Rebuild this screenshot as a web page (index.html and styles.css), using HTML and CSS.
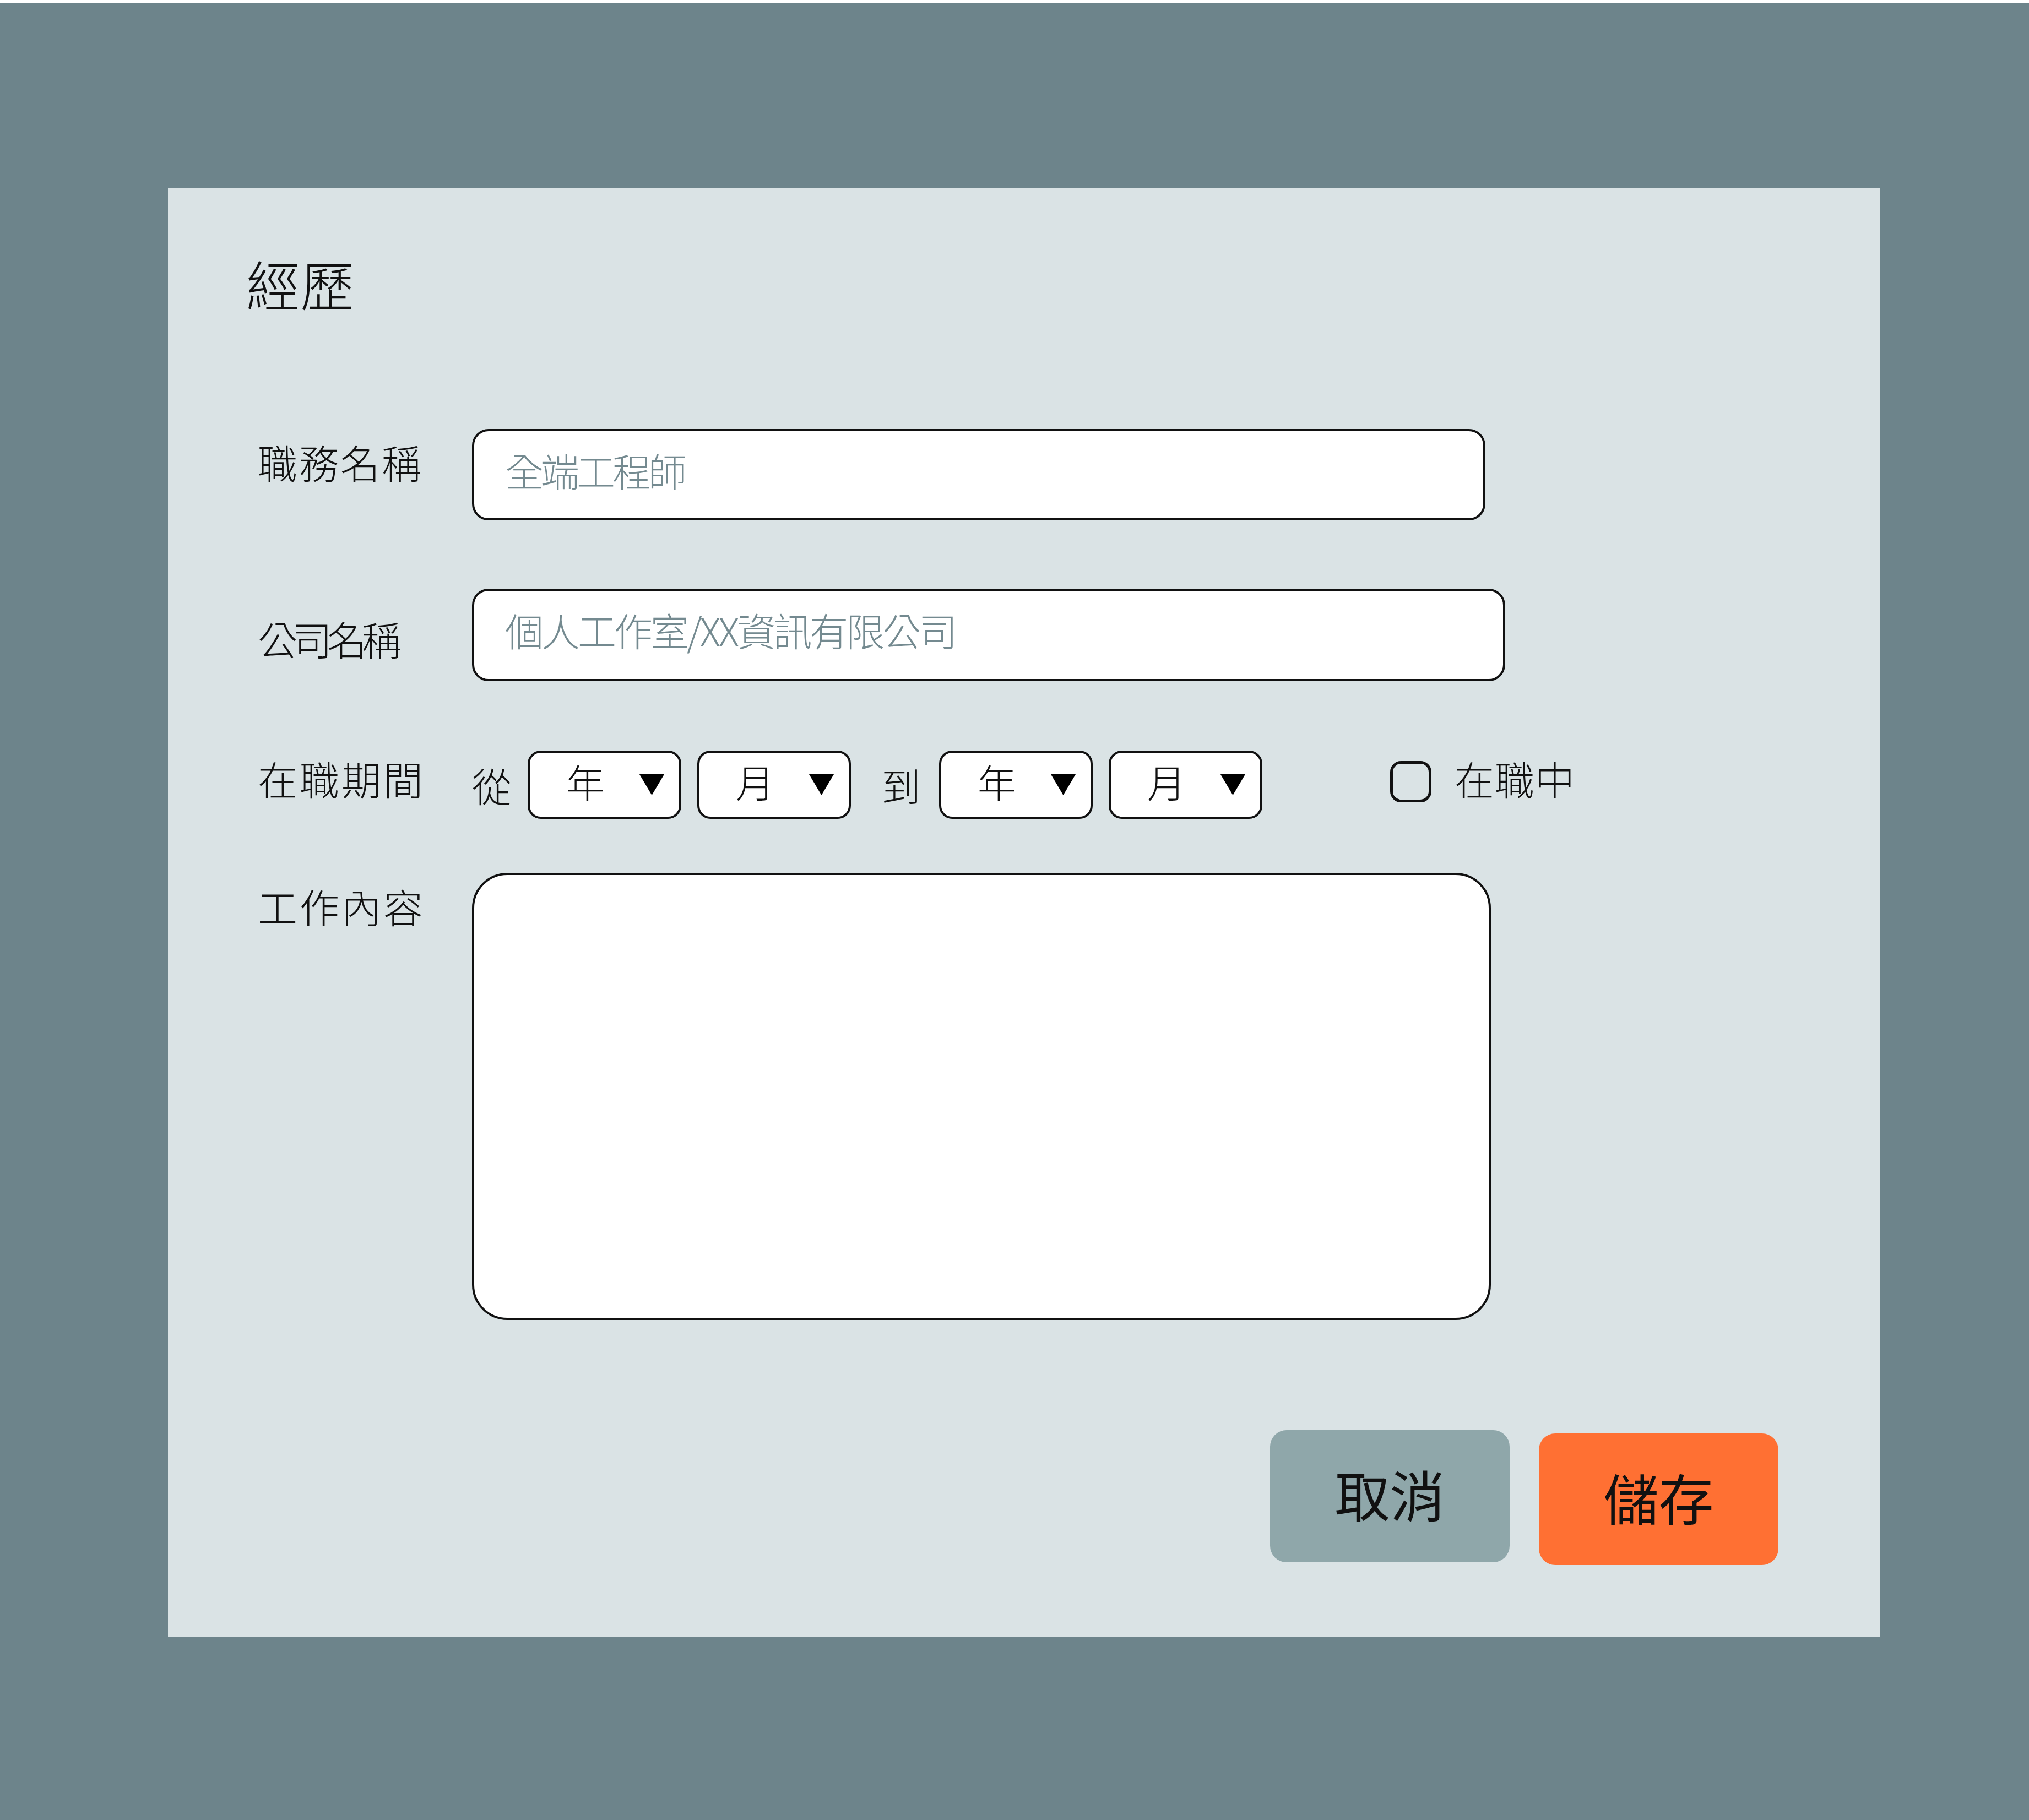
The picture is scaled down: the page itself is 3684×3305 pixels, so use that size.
FILE: index.html
```html
<!DOCTYPE html>
<html lang="zh-Hant">
<head>
<meta charset="utf-8">
<title>經歷</title>
<link rel="stylesheet" href="styles.css">
</head>
<body>
<div class="screen">
  <section class="panel">
    <h1 class="title">經歷</h1>
    <div class="form">
      <div class="row row-job">
        <div class="label label-job">職務名稱</div>
        <div class="field field-job"><span class="placeholder">全端工程師</span></div>
      </div>
      <div class="row row-company">
        <div class="label label-company">公司名稱</div>
        <div class="field field-company"><span class="placeholder placeholder-long">個人工作室/XX資訊有限公司</span></div>
      </div>
      <div class="row row-period">
        <div class="label label-period">在職期間</div>
        <div class="period">
          <span class="word">從</span>
          <div class="select">
            <span class="select-text">年</span>
            <svg class="caret" viewBox="0 0 45 38" width="45" height="38"><polygon points="0,0 45,0 22.5,38"/></svg>
          </div>
          <div class="select">
            <span class="select-text">月</span>
            <svg class="caret" viewBox="0 0 45 38" width="45" height="38"><polygon points="0,0 45,0 22.5,38"/></svg>
          </div>
          <span class="word word-to">到</span>
          <div class="select">
            <span class="select-text">年</span>
            <svg class="caret" viewBox="0 0 45 38" width="45" height="38"><polygon points="0,0 45,0 22.5,38"/></svg>
          </div>
          <div class="select">
            <span class="select-text">月</span>
            <svg class="caret" viewBox="0 0 45 38" width="45" height="38"><polygon points="0,0 45,0 22.5,38"/></svg>
          </div>
          <span class="checkbox"></span>
          <span class="current-text">在職中</span>
        </div>
      </div>
      <div class="row row-content">
        <div class="label label-content">工作內容</div>
        <div class="textarea"></div>
      </div>
    </div>
    <div class="actions">
      <div class="btn btn-cancel">取消</div>
      <div class="btn btn-save">儲存</div>
    </div>
  </section>
</div>
</body>
</html>
```

FILE: styles.css
```css
* {
  box-sizing: border-box;
}

html,
body {
  margin: 0;
}

body {
  padding-top: 5px;
  background: #ffffff;
  font-family: "Noto Sans CJK TC", "Noto Sans CJK SC", sans-serif;
  font-weight: 300;
  color: #111111;
}

.screen {
  height: 3300px;
  background: #6d848b;
  padding: 337px 0 0 305px;
}

.panel {
  width: 3108px;
  height: 2630px;
  background: #dae3e5;
  padding: 122px 0 0 142px;
}

.title {
  margin: 0;
  font-size: 98px;
  font-weight: 300;
  line-height: 1;
}

.form {
  margin-top: 217px;
  margin-left: 21px;
  display: flex;
  flex-direction: column;
}

.row {
  display: grid;
  grid-template-columns: 389px auto;
  align-items: start;
}

.row-company {
  margin-top: 124px;
}

.row-period {
  margin-top: 126px;
}

.row-content {
  margin-top: 98px;
}

.label {
  font-size: 72px;
  line-height: 1;
  white-space: nowrap;
}

.label-job {
  margin-top: 23px;
  letter-spacing: 3px;
}

.label-company {
  margin-top: 54px;
  letter-spacing: -9px;
}

.label-period {
  margin-top: 14px;
  letter-spacing: 4px;
}

.label-content {
  margin-top: 24px;
  letter-spacing: 4px;
}

.field {
  background: #ffffff;
  border: 4px solid #111111;
  border-radius: 30px;
  padding: 36px 0 0 56px;
}

.field-job {
  width: 1840px;
  height: 166px;
}

.field-company {
  width: 1876px;
  height: 168px;
}

.placeholder {
  display: block;
  font-size: 70px;
  line-height: 1;
  color: #748a90;
  letter-spacing: -5px;
  white-space: nowrap;
}

.placeholder-long {
  letter-spacing: -4px;
}

.period {
  display: flex;
  align-items: center;
  gap: 29px;
}

.word {
  font-size: 72px;
  line-height: 1;
}

.word-to {
  margin-left: 26px;
  margin-right: 4px;
}

.select {
  width: 279px;
  height: 124px;
  background: #ffffff;
  border: 4px solid #111111;
  border-radius: 24px;
  display: flex;
  align-items: center;
  justify-content: space-between;
  padding: 0 27px 0 66px;
}

.select-text {
  font-size: 70px;
  line-height: 1;
  margin-bottom: 12px;
}

.caret {
  display: block;
  fill: #000000;
}

.checkbox {
  width: 75px;
  height: 75px;
  border: 5px solid #111111;
  border-radius: 20px;
  margin-left: 203px;
  margin-bottom: 11px;
}

.current-text {
  font-size: 72px;
  line-height: 1;
  letter-spacing: 1px;
  margin-left: 13px;
  margin-bottom: 24px;
}

.textarea {
  width: 1850px;
  height: 812px;
  background: #ffffff;
  border: 4px solid #111111;
  border-radius: 64px;
}

.actions {
  margin-top: 200px;
  display: flex;
  justify-content: flex-end;
  align-items: flex-start;
  gap: 53px;
  padding-right: 184px;
}

.btn {
  width: 435px;
  height: 240px;
  border-radius: 30px;
  display: flex;
  align-items: center;
  justify-content: center;
  font-size: 100px;
  font-weight: 400;
  line-height: 1;
  color: #111111;
  padding-bottom: 10px;
}

.btn-cancel {
  background: #8fa7aa;
}

.btn-save {
  margin-top: 6px;
  height: 239px;
  background: #ff7033;
}
```
